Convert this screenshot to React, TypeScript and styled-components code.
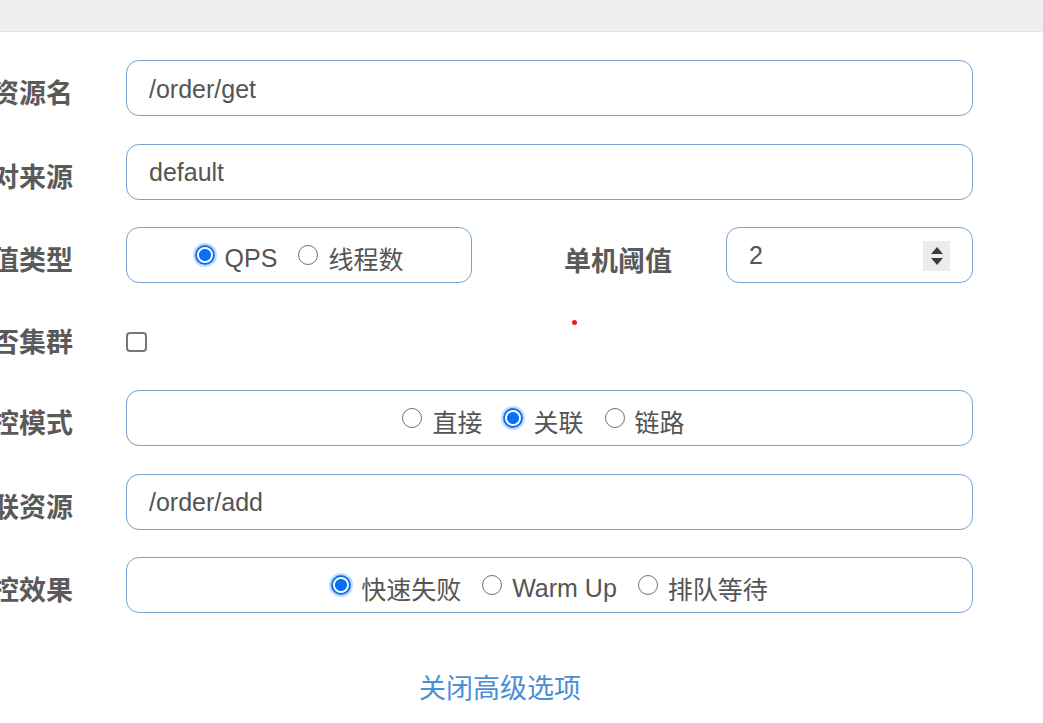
import React from "react";
import styled, { createGlobalStyle } from "styled-components";

const GlobalStyle = createGlobalStyle`
  html, body { margin: 0; padding: 0; background: #fff; }
  body {
    font-family: "Liberation Sans", Arial, "Noto Sans CJK SC", sans-serif;
    overflow: hidden;
  }
`;

const Page = styled.div`
  position: relative;
  width: 1043px;
  height: 723px;
  overflow: hidden;
  background: #fff;
`;

const TopBar = styled.div`
  height: 31px;
  background: #efefef;
  border-bottom: 1px solid #e3e3e3;
`;

const Form = styled.form`
  display: flex;
  flex-direction: column;
  gap: 27.5px;
  padding: 28px 70px 0 0;
`;

const Row = styled.div<{ $tall?: boolean }>`
  display: grid;
  grid-template-columns: 73px 1fr;
  column-gap: 53px;
  align-items: center;
  min-height: ${(p) => (p.$tall ? "52px" : "56px")};
`;

const Label = styled.div`
  display: flex;
  justify-content: flex-end;
  white-space: nowrap;
  font-family: "Noto Sans CJK SC", sans-serif;
  font-weight: 700;
  font-size: 27px;
  color: #5a5a5a;
  padding-top: 7px;
`;

const TextInput = styled.input`
  box-sizing: border-box;
  width: 100%;
  height: 56px;
  border: 1.5px solid #76a1d1;
  border-radius: 13px;
  padding: 2px 22px 0 22px;
  font-family: "Liberation Sans", Arial, "Noto Sans CJK SC", sans-serif;
  font-size: 25px;
  color: #555;
  background: #fff;
  outline: none;
`;

const RadioBox = styled.div<{ $shift?: number }>`
  box-sizing: border-box;
  height: 56px;
  border: 1.5px solid #76a1d1;
  border-radius: 13px;
  display: flex;
  align-items: center;
  justify-content: center;
  gap: 21px;
  padding-top: 6px;
  padding-right: ${(p) => p.$shift ?? 0}px;
`;

const RadioItem = styled.label`
  display: flex;
  align-items: center;
  gap: 10px;
  font-family: "Liberation Sans", Arial, "Noto Sans CJK SC", sans-serif;
  font-size: 25px;
  color: #555;
  cursor: pointer;
  white-space: nowrap;
`;

const Radio = styled.input.attrs({ type: "radio" })`
  appearance: none;
  -webkit-appearance: none;
  box-sizing: border-box;
  width: 20px;
  height: 20px;
  margin: 0 0 6px 0;
  border-radius: 50%;
  border: 1.8px solid #6f6f6f;
  background: #fff;
  flex: none;
  &:checked {
    border: 2px solid #0b6ff4;
    background: radial-gradient(circle, #0b6ff4 0 5.6px, #fff 6.4px);
    box-shadow: 0 0 0 2px rgba(11, 111, 244, 0.25);
  }
`;

const Split = styled.div`
  display: grid;
  grid-template-columns: 346px 1fr 247px;
  align-items: center;
`;

const SubLabel = styled(Label)`
  padding-right: 54px;
  padding-top: 9px;
`;

const NumberBox = styled.div`
  box-sizing: border-box;
  height: 56px;
  border: 1.5px solid #76a1d1;
  border-radius: 13px;
  display: flex;
  align-items: center;
  padding: 0 22px 0 22px;
`;

const NumberField = styled.input`
  flex: 1;
  min-width: 0;
  border: none;
  outline: none;
  font-family: "Liberation Sans", Arial, sans-serif;
  font-size: 25px;
  color: #555;
  padding: 0;
  background: transparent;
`;

const Spinner = styled.span`
  width: 27px;
  height: 30px;
  background: #ececec;
  display: flex;
  flex-direction: column;
  align-items: center;
  justify-content: center;
  gap: 4px;
  margin-top: 1px;
`;

const CheckBox = styled.input.attrs({ type: "checkbox" })`
  appearance: none;
  -webkit-appearance: none;
  box-sizing: border-box;
  width: 21px;
  height: 20px;
  margin: 14px 0 0 0;
  border: 2px solid #767676;
  border-radius: 4px;
  background: #fff;
`;

const LinkRow = styled.div`
  padding: 54px 43px 0 0;
  text-align: center;
`;

const Link = styled.a`
  font-family: "Noto Sans CJK SC", sans-serif;
  font-size: 27px;
  color: #4a8fd5;
  text-decoration: none;
  cursor: pointer;
`;

const Dot = styled.span`
  position: absolute;
  left: 572px;
  top: 320px;
  width: 5px;
  height: 5px;
  border-radius: 50%;
  background: #e3201b;
`;

const Arrows = () => (
  <>
    <svg width="12" height="7" viewBox="0 0 12 7">
      <path d="M6 0 L12 7 L0 7 Z" fill="#3d3d3d" />
    </svg>
    <svg width="12" height="7" viewBox="0 0 12 7">
      <path d="M0 0 L12 0 L6 7 Z" fill="#3d3d3d" />
    </svg>
  </>
);

export default function App() {
  return (
    <Page>
      <GlobalStyle />
      <TopBar />
      <Form onSubmit={(e) => e.preventDefault()}>
        <Row>
          <Label>资源名</Label>
          <TextInput defaultValue="/order/get" />
        </Row>
        <Row>
          <Label>针对来源</Label>
          <TextInput defaultValue="default" />
        </Row>
        <Row>
          <Label>阈值类型</Label>
          <Split>
            <RadioBox>
              <RadioItem>
                <Radio name="grade" defaultChecked />
                QPS
              </RadioItem>
              <RadioItem>
                <Radio name="grade" />
                线程数
              </RadioItem>
            </RadioBox>
            <SubLabel>单机阈值</SubLabel>
            <NumberBox>
              <NumberField defaultValue="2" />
              <Spinner>
                <Arrows />
              </Spinner>
            </NumberBox>
          </Split>
        </Row>
        <Row $tall>
          <Label>是否集群</Label>
          <div>
            <CheckBox />
          </div>
        </Row>
        <Row>
          <Label>流控模式</Label>
          <RadioBox $shift={12}>
            <RadioItem>
              <Radio name="strategy" />
              直接
            </RadioItem>
            <RadioItem>
              <Radio name="strategy" defaultChecked />
              关联
            </RadioItem>
            <RadioItem>
              <Radio name="strategy" />
              链路
            </RadioItem>
          </RadioBox>
        </Row>
        <Row>
          <Label>关联资源</Label>
          <TextInput defaultValue="/order/add" />
        </Row>
        <Row>
          <Label>流控效果</Label>
          <RadioBox>
            <RadioItem>
              <Radio name="behavior" defaultChecked />
              快速失败
            </RadioItem>
            <RadioItem>
              <Radio name="behavior" />
              Warm Up
            </RadioItem>
            <RadioItem>
              <Radio name="behavior" />
              排队等待
            </RadioItem>
          </RadioBox>
        </Row>
      </Form>
      <LinkRow>
        <Link>关闭高级选项</Link>
      </LinkRow>
      <Dot />
    </Page>
  );
}
